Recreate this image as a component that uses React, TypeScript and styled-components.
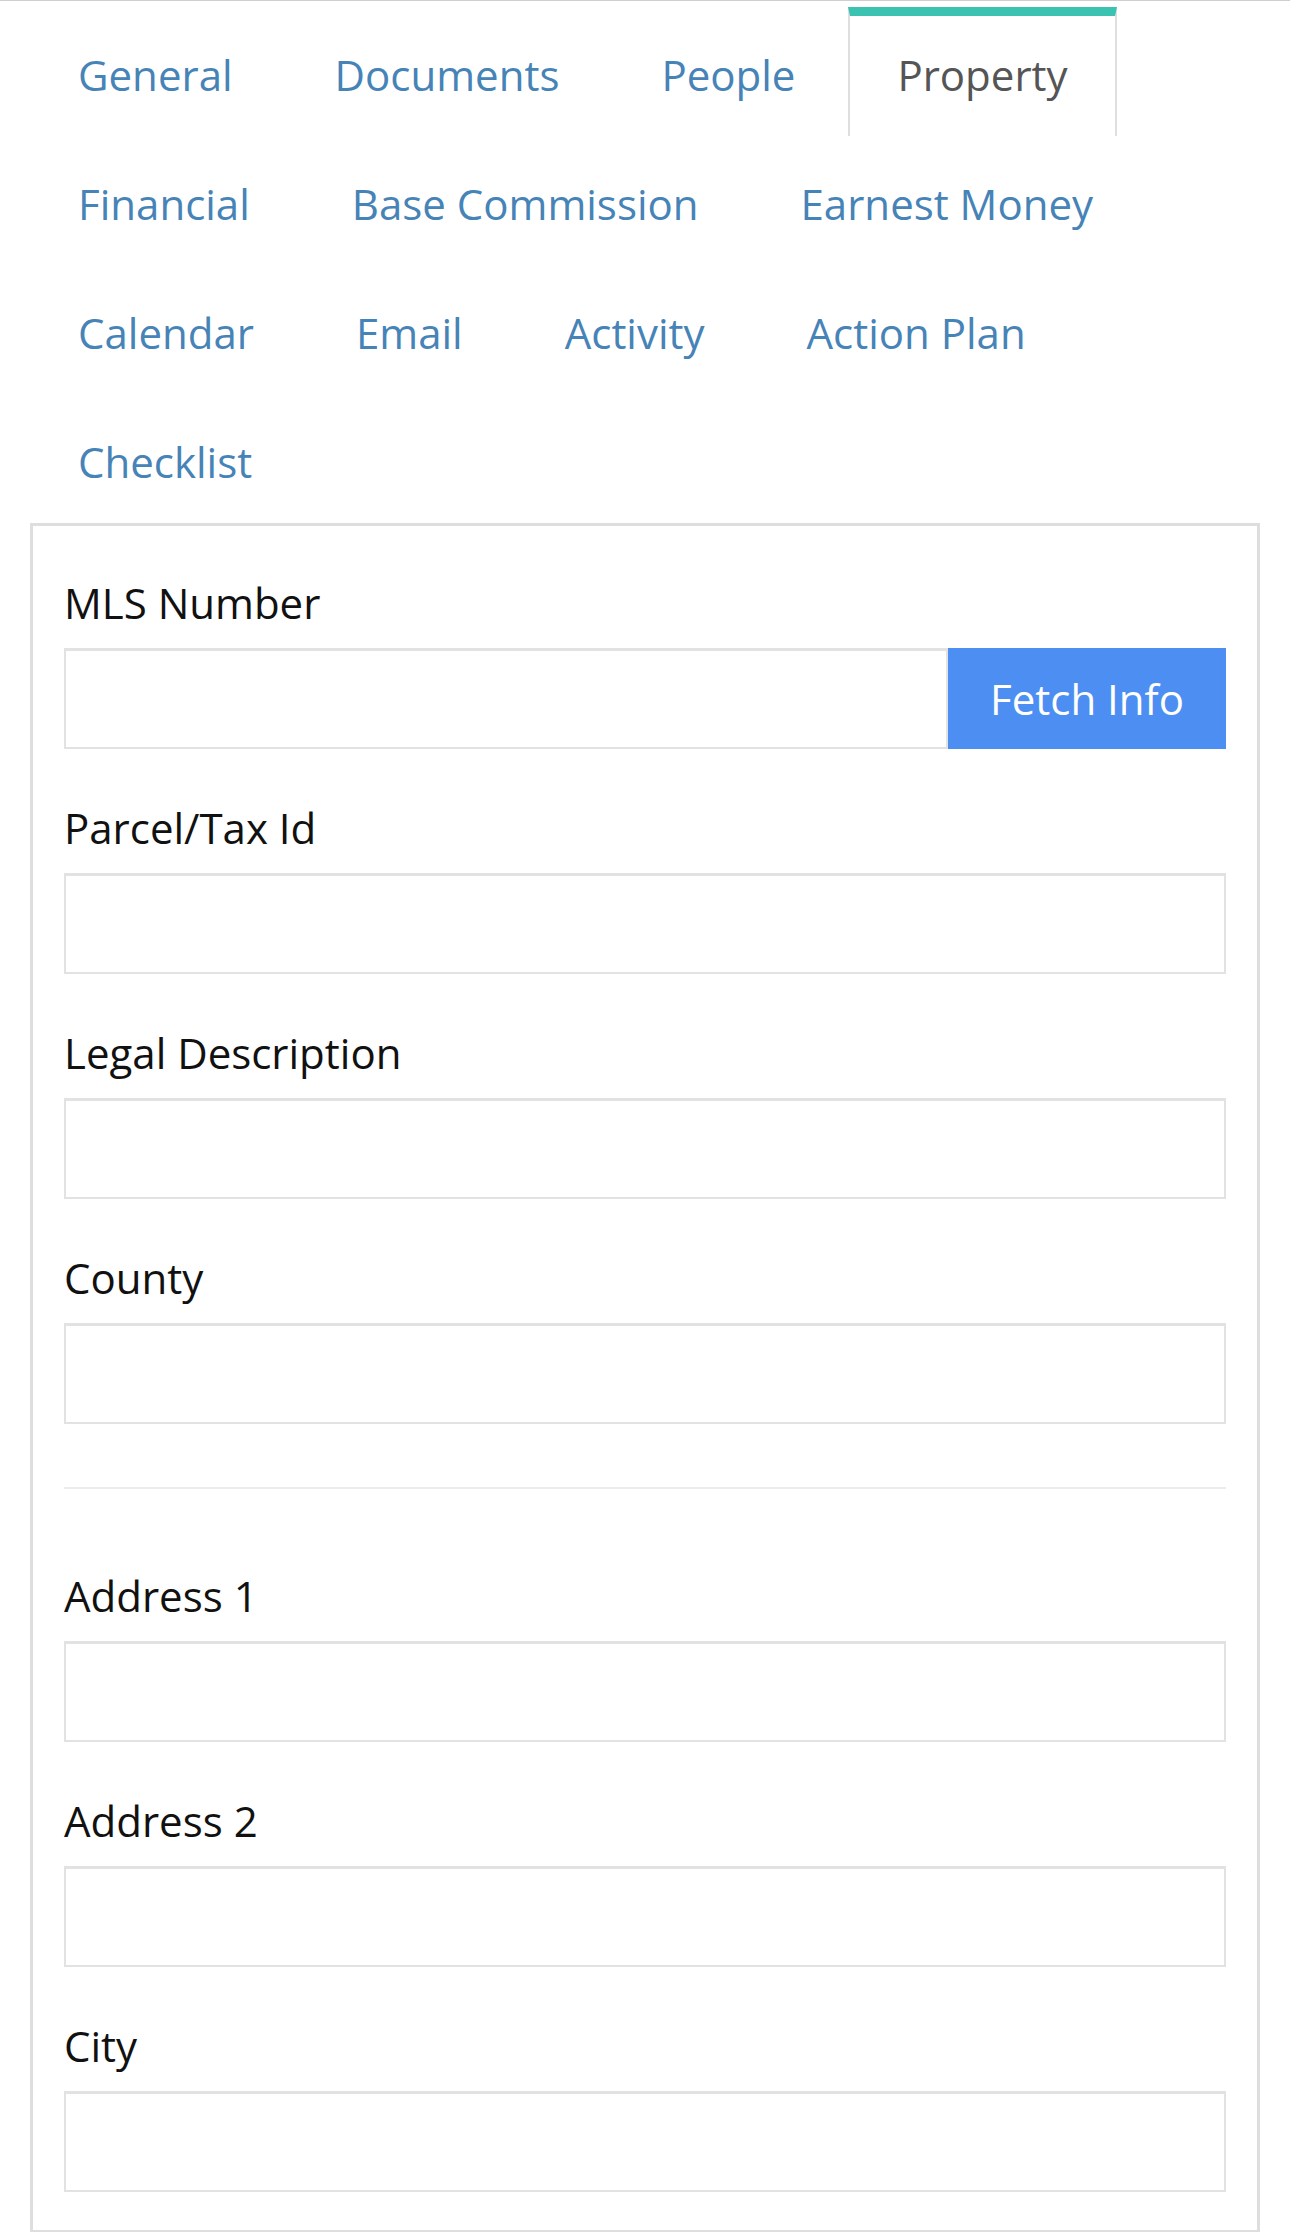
import React from "react";
import styled, { createGlobalStyle } from "styled-components";

const GlobalStyle = createGlobalStyle`
  html, body {
    margin: 0;
    padding: 0;
    background: #fff;
    font-family: "Open Sans", "Noto Sans", sans-serif;
  }
  * { box-sizing: border-box; }
`;

const Page = styled.div`
  border-top: 1px solid #cfcfcf;
  padding: 0 30px;
`;

const TabList = styled.ul`
  list-style: none;
  margin: 0 0 0 -1px;
  padding: 6px 0 0 0;
  display: flex;
  flex-wrap: wrap;
`;

const Tab = styled.li<{ $active?: boolean }>`
  margin-right: 4px;
  padding: 29px 47px 31px;
  border-top: 9px solid ${(p) => (p.$active ? "#3bc2b0" : "transparent")};
  border-left: 2px solid ${(p) => (p.$active ? "#dedede" : "transparent")};
  border-right: 2px solid ${(p) => (p.$active ? "#dedede" : "transparent")};
  font-size: 42px;
  line-height: 60px;
  color: ${(p) => (p.$active ? "#555" : "#4683b7")};
  white-space: nowrap;
`;

const Panel = styled.div`
  border: 3px solid #dedede;
  border-bottom-width: 2px;
  padding: 47px 31px 0;
`;

const Group = styled.div`
  margin-bottom: 49px;
  &:last-child {
    margin-bottom: 38px;
  }
`;

const Label = styled.label`
  display: block;
  font-size: 42px;
  line-height: 60px;
  color: #111;
  margin-bottom: 15px;
`;

const InputRow = styled.div`
  display: flex;
`;

const Input = styled.input`
  flex: 1;
  min-width: 0;
  height: 101px;
  border: 2px solid #e2e2e2;
  border-top-width: 3px;
  background: #fff;
  font: inherit;
  font-size: 42px;
  padding: 0 20px;
  outline: none;
`;

const FetchButton = styled.button`
  height: 101px;
  border: none;
  background: #4d8ef2;
  color: #fff;
  font-family: inherit;
  font-size: 42px;
  padding: 0 42px;
`;

const Divider = styled.hr`
  border: none;
  border-top: 2px solid #ececec;
  margin: 63px 0 77px;
`;

const tabs = [
  "General",
  "Documents",
  "People",
  "Property",
  "Financial",
  "Base Commission",
  "Earnest Money",
  "Calendar",
  "Email",
  "Activity",
  "Action Plan",
  "Checklist",
];

function Field({ label }: { label: string }) {
  return (
    <Group>
      <Label>{label}</Label>
      <InputRow>
        <Input type="text" />
      </InputRow>
    </Group>
  );
}

export default function App() {
  return (
    <>
      <GlobalStyle />
      <Page>
        <TabList>
          {tabs.map((t) => (
            <Tab key={t} $active={t === "Property"}>
              {t}
            </Tab>
          ))}
        </TabList>
        <Panel>
          <Group>
            <Label>MLS Number</Label>
            <InputRow>
              <Input type="text" />
              <FetchButton>Fetch Info</FetchButton>
            </InputRow>
          </Group>
          <Field label="Parcel/Tax Id" />
          <Field label="Legal Description" />
          <Field label="County" />
          <Divider />
          <Field label="Address 1" />
          <Field label="Address 2" />
          <Field label="City" />
        </Panel>
      </Page>
    </>
  );
}
